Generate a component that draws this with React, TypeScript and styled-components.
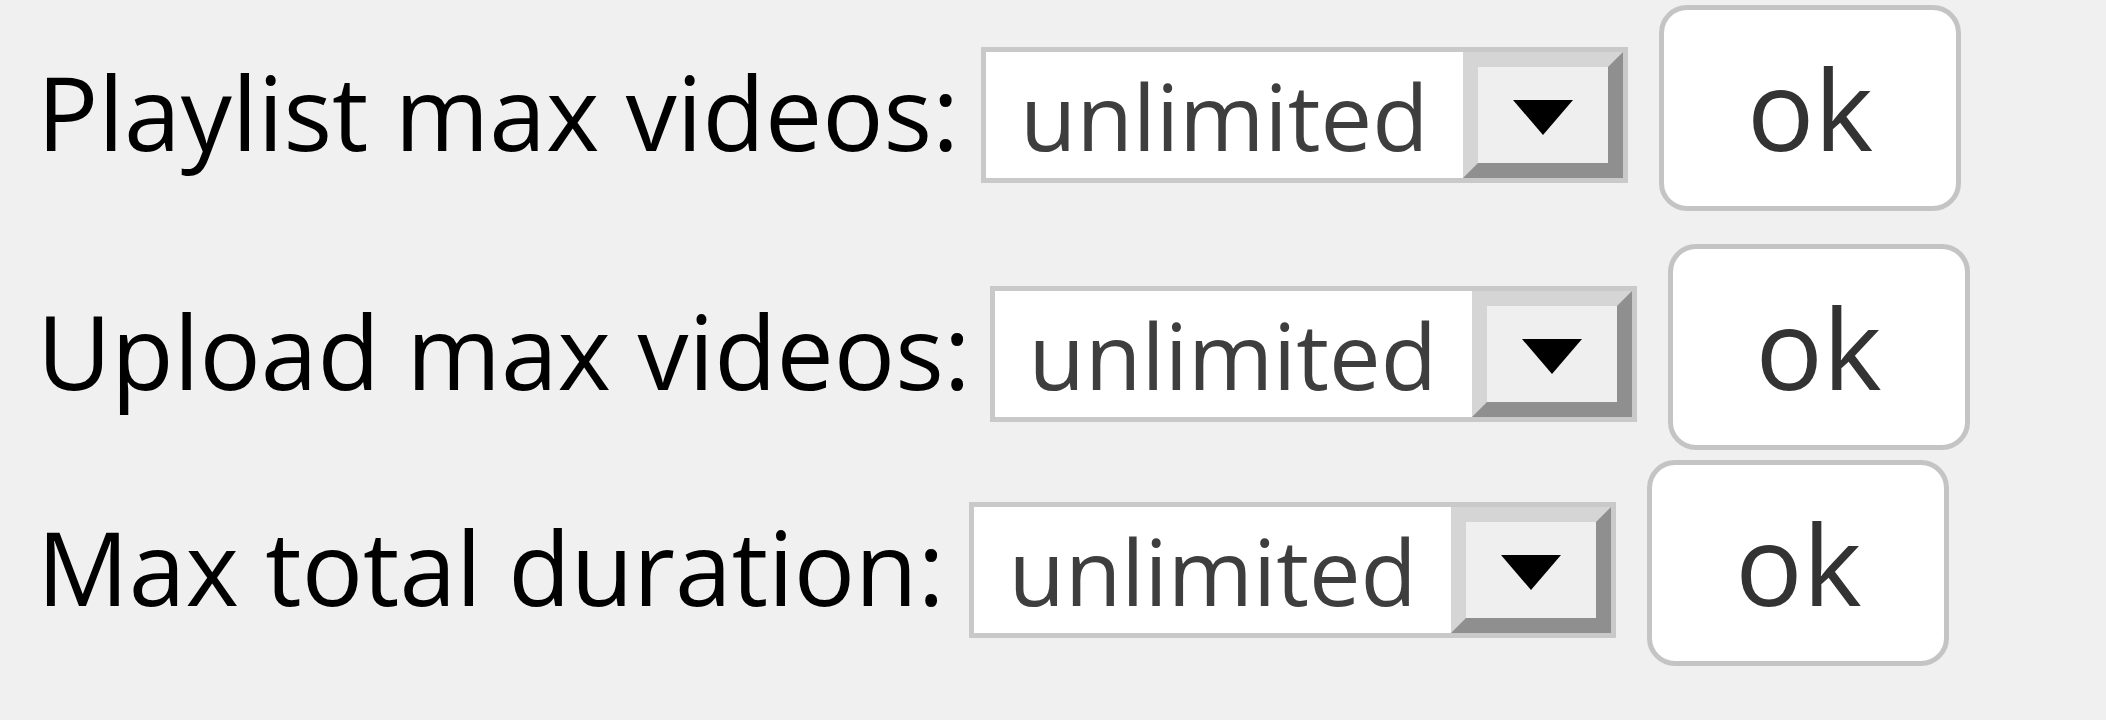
import React from "react";
import styled, { createGlobalStyle } from "styled-components";

const GlobalStyle = createGlobalStyle`
  html, body {
    margin: 0;
    padding: 0;
    background: #f0f0f0;
  }
  body {
    font-family: "Open Sans", "Noto Sans", sans-serif;
  }
`;

const Page = styled.div`
  display: flex;
  flex-direction: column;
  width: 2106px;
  height: 720px;
  box-sizing: border-box;
  padding: 5px 0 0 37px;
`;

const Row = styled.div<{ $top: number }>`
  display: flex;
  align-items: baseline;
  margin-top: ${(p) => p.$top}px;
`;

const Label = styled.span<{ $gap: number }>`
  font-size: 102px;
  line-height: 1;
  color: #000;
  white-space: nowrap;
  margin-right: ${(p) => p.$gap}px;
`;

const Select = styled.div`
  display: inline-flex;
  align-items: stretch;
  width: 647px;
  height: 136px;
  box-sizing: border-box;
  border: 5px solid #c9c9c9;
  background: #fff;
`;

const Value = styled.span`
  flex: 1;
  padding: 3px 0 0 34px;
  font-size: 92px;
  line-height: 122px;
  color: #3e3e3e;
  white-space: nowrap;
`;

const ArrowButton = styled.span`
  display: flex;
  align-items: center;
  justify-content: center;
  width: 160px;
  box-sizing: border-box;
  border-style: solid;
  border-width: 15px;
  border-color: #d5d5d5 #8f8f8f #8f8f8f #d5d5d5;
  background: #efefef;
`;

const Triangle = styled.span`
  width: 0;
  height: 0;
  margin-top: 4px;
  border-left: 30px solid transparent;
  border-right: 30px solid transparent;
  border-top: 35px solid #000;
`;

const OkButton = styled.button`
  margin-left: 31px;
  width: 302px;
  height: 206px;
  box-sizing: border-box;
  padding: 0;
  border: 5px solid #c4c4c4;
  border-radius: 28px;
  background: #fff;
  font-family: "Open Sans", "Noto Sans", sans-serif;
  font-size: 112px;
  line-height: 1;
  color: #333;
`;

type LimitRowProps = {
  label: string;
  top: number;
  gap: number;
};

const LimitRow = ({ label, top, gap }: LimitRowProps) => {
  return (
    <Row $top={top}>
      <Label $gap={gap}>{label}</Label>
      <Select>
        <Value>unlimited</Value>
        <ArrowButton>
          <Triangle />
        </ArrowButton>
      </Select>
      <OkButton>ok</OkButton>
    </Row>
  );
};

const App = () => {
  return (
    <>
      <GlobalStyle />
      <Page>
        <LimitRow label="Playlist max videos:" top={0} gap={22} />
        <LimitRow label="Upload max videos:" top={33} gap={19} />
        <LimitRow label="Max total duration:" top={10} gap={25} />
      </Page>
    </>
  );
};

export default App;
